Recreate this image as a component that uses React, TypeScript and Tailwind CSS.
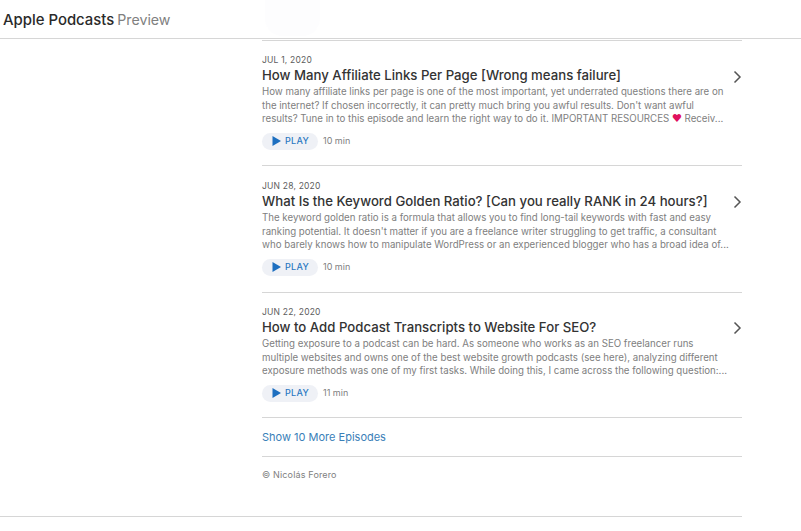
import React from 'react';

type Episode = {
  date: string;
  title: string;
  lines: React.ReactNode[];
  duration: string;
  rowClass: string;
  bodyClass: string;
  playClass: string;
  chevronClass: string;
};

const EPISODES: Episode[] = [
  {
    date: 'JUL 1, 2020',
    title: 'How Many Affiliate Links Per Page [Wrong means failure]',
    lines: [
      'How many affiliate links per page is one of the most important, yet underrated questions there are on',
      "the internet? If chosen incorrectly, it can pretty much bring you awful results. Don't want awful",
      <>
        results? Tune in to this episode and learn the right way to do it. IMPORTANT RESOURCES{' '}
        <span className="text-[#e0115f]">♥</span> Receiv...
      </>,
    ],
    duration: '10 min',
    rowClass: 'h-[125px] pt-[13px]',
    bodyClass: 'mt-0',
    playClass: 'mt-[7px]',
    chevronClass: 'mt-[16px]',
  },
  {
    date: 'JUN 28, 2020',
    title: 'What Is the Keyword Golden Ratio? [Can you really RANK in 24 hours?]',
    lines: [
      'The keyword golden ratio is a formula that allows you to find long-tail keywords with fast and easy',
      "ranking potential. It doesn't matter if you are a freelance writer struggling to get traffic, a consultant",
      'who barely knows how to manipulate WordPress or an experienced blogger who has a broad idea of...',
    ],
    duration: '10 min',
    rowClass: 'h-[127px] pt-[14px]',
    bodyClass: 'mt-[1px]',
    playClass: 'mt-[7px]',
    chevronClass: 'mt-[15px]',
  },
  {
    date: 'JUN 22, 2020',
    title: 'How to Add Podcast Transcripts to Website For SEO?',
    lines: [
      'Getting exposure to a podcast can be hard. As someone who works as an SEO freelancer runs',
      'multiple websites and owns one of the best website growth podcasts (see here), analyzing different',
      'exposure methods was one of my first tasks. While doing this, I came across the following question:...',
    ],
    duration: '11 min',
    rowClass: 'h-[125px] pt-[13px]',
    bodyClass: 'mt-0',
    playClass: 'mt-[7px]',
    chevronClass: 'mt-[15px]',
  },
];

const EpisodeRow: React.FC<{ episode: Episode }> = ({ episode }) => (
  <div className={`flex border-b border-[#d6d6d6] ${episode.rowClass}`}>
    <div className="w-[466px] shrink-0">
      <p className="text-[8.5px] leading-[12px] tracking-[0.2px] text-[#5c5c5c]">{episode.date}</p>
      <h3 className="text-[13.2px] leading-[18px] font-medium whitespace-nowrap text-[#333]">
        {episode.title}
      </h3>
      <div className={`mt-[1px] text-[9.7px] leading-[13.5px] whitespace-nowrap text-[#808080] ${episode.bodyClass}`}>
        {episode.lines.map((line, index) => (
          <p key={index}>{line}</p>
        ))}
      </div>
      <div className={`flex items-center gap-[5px] ${episode.playClass}`}>
        <span className="flex h-[17px] w-[56px] items-center gap-[4px] rounded-full bg-[#eff1f6] pl-[10px]">
          <svg width="9" height="10" viewBox="0 0 9 10" className="fill-[#1d6fc0]">
            <path d="M0.5 0 L9 5 L0.5 10 Z" />
          </svg>
          <span className="text-[9px] font-medium tracking-[0.3px] text-[#2a78c2]">PLAY</span>
        </span>
        <span className="text-[9px] text-[#808080]">{episode.duration}</span>
      </div>
    </div>
    <svg width="9" height="14" viewBox="0 0 9 14" fill="none" className={`ml-[5px] stroke-[#555] ${episode.chevronClass}`}>
      <path d="M1.5 1.5 L7 7 L1.5 12.5" strokeWidth="1.5" />
    </svg>
  </div>
);

export default function App() {
  return (
    <div className="h-[531px] w-[801px] overflow-hidden bg-white font-['Inter','Liberation_Sans',sans-serif]">
      <header className="relative flex h-[39px] items-baseline gap-[3px] border-b border-[#d6d6d6] pt-[9px] pl-[3px]">
        <span className="text-[14.9px] font-medium text-[#2a2a2a]">Apple Podcasts</span>
        <span className="text-[14.2px] text-[#808080]">Preview</span>
        <div className="absolute top-0 left-[265px] h-[36px] w-[55px] rounded-b-[18px] bg-[#fdfdfe]" />
      </header>

      <main className="ml-[262px] w-[480px]">
        <div className="mt-[1px] h-[1px] bg-[#d6d6d6]" />
        {EPISODES.map(episode => (
          <EpisodeRow key={episode.date} episode={episode} />
        ))}
        <div className="flex h-[39px] items-center border-b border-[#d6d6d6] text-[11px] text-[#3a80b8]">
          Show 10 More Episodes
        </div>
        <p className="pt-[11px] text-[9px] leading-[13px] tracking-[0.15px] text-[#808080]">© Nicolás Forero</p>
      </main>

      <div className="mt-[35px] h-[1px] w-[742px] bg-[#d6d6d6]" />
    </div>
  );
}
